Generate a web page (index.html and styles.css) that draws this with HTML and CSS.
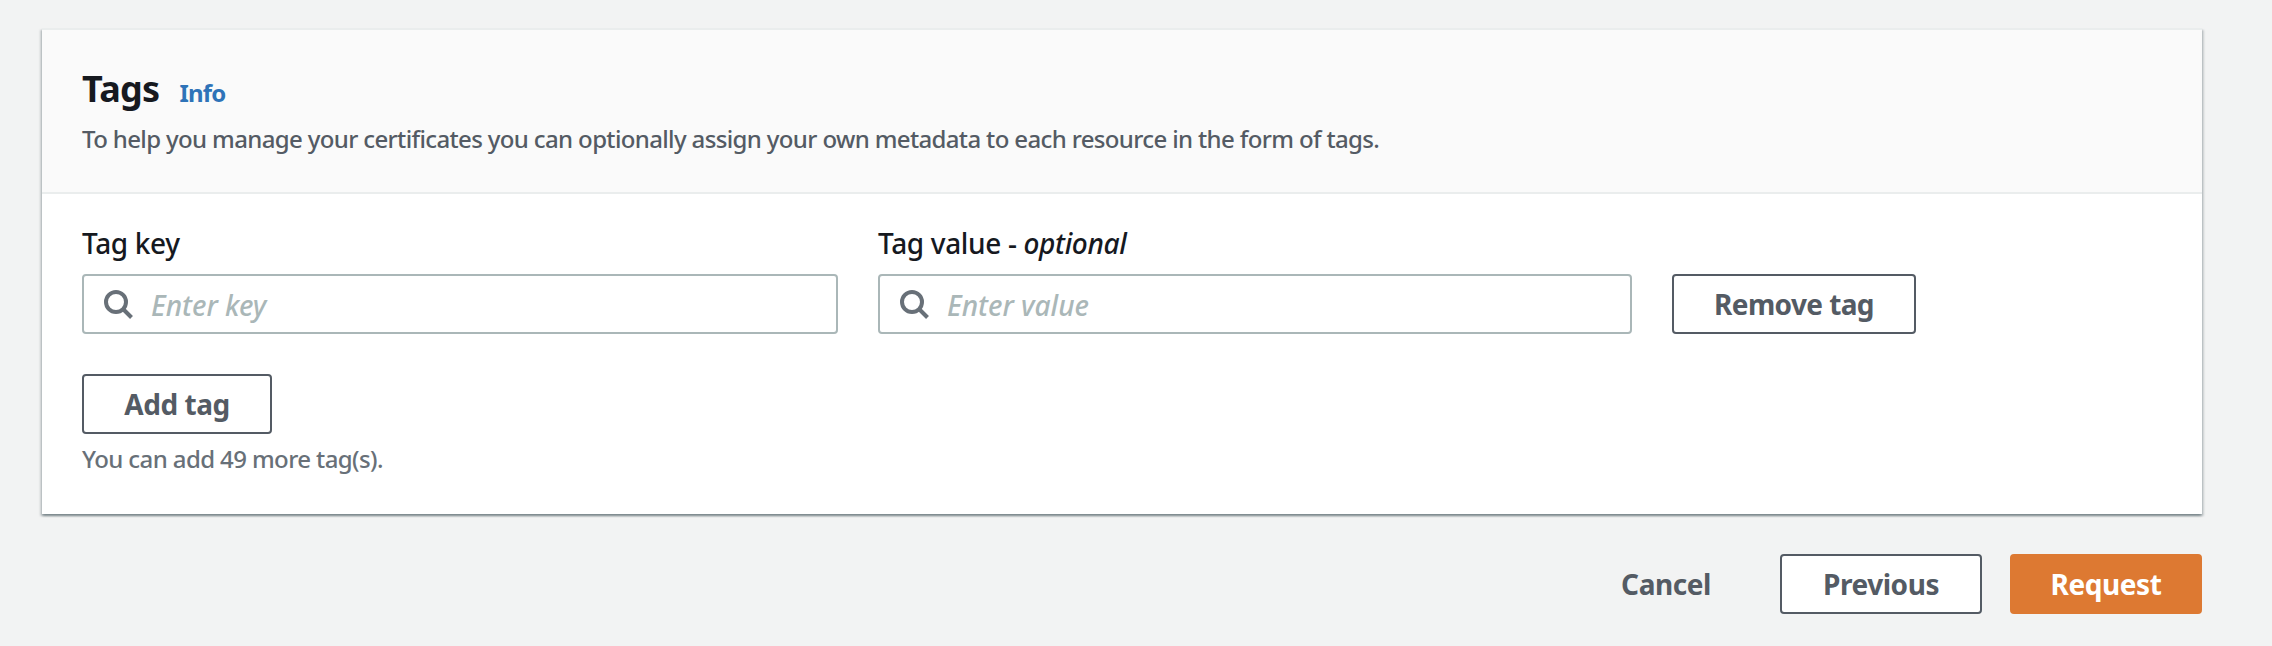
FILE: index.html
```html
<!DOCTYPE html>
<html lang="en">
<head>
<meta charset="utf-8">
<title>Tags</title>
<link rel="stylesheet" href="styles.css">
</head>
<body>
<main class="page">
  <section class="panel">
    <header class="panel-header">
      <div class="title-row">
        <h2 class="title">Tags</h2>
        <a class="info">Info</a>
      </div>
      <p class="description">To help you manage your certificates you can optionally assign your own metadata to each resource in the form of tags.</p>
    </header>
    <div class="panel-body">
      <div class="tag-row">
        <div class="field">
          <div class="label label-key">Tag key</div>
          <div class="input">
            <svg class="search-icon" viewBox="0 0 32 32"><circle cx="14" cy="14" r="10"/><path d="M21 21l8.5 8.5"/></svg>
            <span class="placeholder">Enter key</span>
          </div>
        </div>
        <div class="field">
          <div class="label label-value">Tag value - <em>optional</em></div>
          <div class="input">
            <svg class="search-icon" viewBox="0 0 32 32"><circle cx="14" cy="14" r="10"/><path d="M21 21l8.5 8.5"/></svg>
            <span class="placeholder">Enter value</span>
          </div>
        </div>
        <button class="button remove"><span>Remove tag</span></button>
      </div>
      <button class="button add"><span>Add tag</span></button>
      <p class="hint">You can add 49 more tag(s).</p>
    </div>
  </section>
  <footer class="actions">
    <button class="button cancel"><span>Cancel</span></button>
    <button class="button previous"><span>Previous</span></button>
    <button class="button request"><span>Request</span></button>
  </footer>
</main>
</body>
</html>
```
FILE: styles.css
```css
* { box-sizing: border-box; }
body {
  margin: 0;
  background: #f2f3f3;
  color: #16191f;
  font-family: "Noto Sans", "Open Sans", sans-serif;
  font-size: 28px;
  font-weight: 500;
}
h2, p { margin: 0; }
.page { height: 646px; padding: 28px 70px 0 42px; overflow: hidden; }
.panel {
  height: 486px;
  background: #fff;
  border-top: 2px solid #eaeded;
  box-shadow: 0 2px 2px 0 rgba(0, 28, 36, .3), 2px 2px 2px 0 rgba(0, 28, 36, .15), -2px 2px 2px 0 rgba(0, 28, 36, .15);
}
.panel-header {
  height: 164px;
  padding: 32px 40px 0;
  background: #fafafa;
  border-bottom: 2px solid #eaeded;
}
.title-row { display: flex; align-items: baseline; gap: 20px; height: 54px; white-space: nowrap; }
.title { font-size: 36px; line-height: 54px; font-weight: 700; letter-spacing: -.7px; }
.info { font-size: 24px; font-weight: 700; color: #2e73b8; letter-spacing: -.8px; }
.description { font-size: 24px; line-height: 36px; color: #545b64; white-space: nowrap; padding-top: 5px; letter-spacing: -.64px; }
.panel-body { padding: 29px 40px 0; }
.tag-row { display: grid; grid-template-columns: 756px 754px 244px; gap: 40px; align-items: end; }
.label { line-height: 40px; margin-bottom: 11px; white-space: nowrap; letter-spacing: -.35px; }
.input {
  display: flex;
  align-items: center;
  height: 60px;
  padding-left: 18px;
  border: 2px solid #aab7b8;
  border-radius: 4px;
  background: #fff;
}
.search-icon { width: 32px; height: 32px; fill: none; stroke: #687078; stroke-width: 4; }
.placeholder { margin-left: 17px; padding-top: 2px; color: #aab7b8; font-style: italic; white-space: nowrap; }
.button {
  display: flex;
  align-items: center;
  justify-content: center;
  height: 60px;
  padding: 0;
  border: 2px solid #545b64;
  border-radius: 4px;
  background: #fff;
  color: #545b64;
  font: 700 28px/40px "Noto Sans", "Open Sans", sans-serif;
  letter-spacing: -.45px;
  white-space: nowrap;
}
.remove { width: 244px; letter-spacing: -.6px; }
.add { width: 190px; margin-top: 40px; }
.hint { font-size: 24px; line-height: 36px; margin-top: 7px; color: #687078; white-space: nowrap; letter-spacing: -.6px; }
.actions { display: flex; justify-content: flex-end; margin-top: 40px; }
.cancel { width: 172px; margin-right: 28px; background: transparent; border-color: transparent; }
.previous { width: 202px; margin-right: 28px; }
.request { width: 192px; background: #dd7932; border-color: #dd7932; color: #fff; }
```
